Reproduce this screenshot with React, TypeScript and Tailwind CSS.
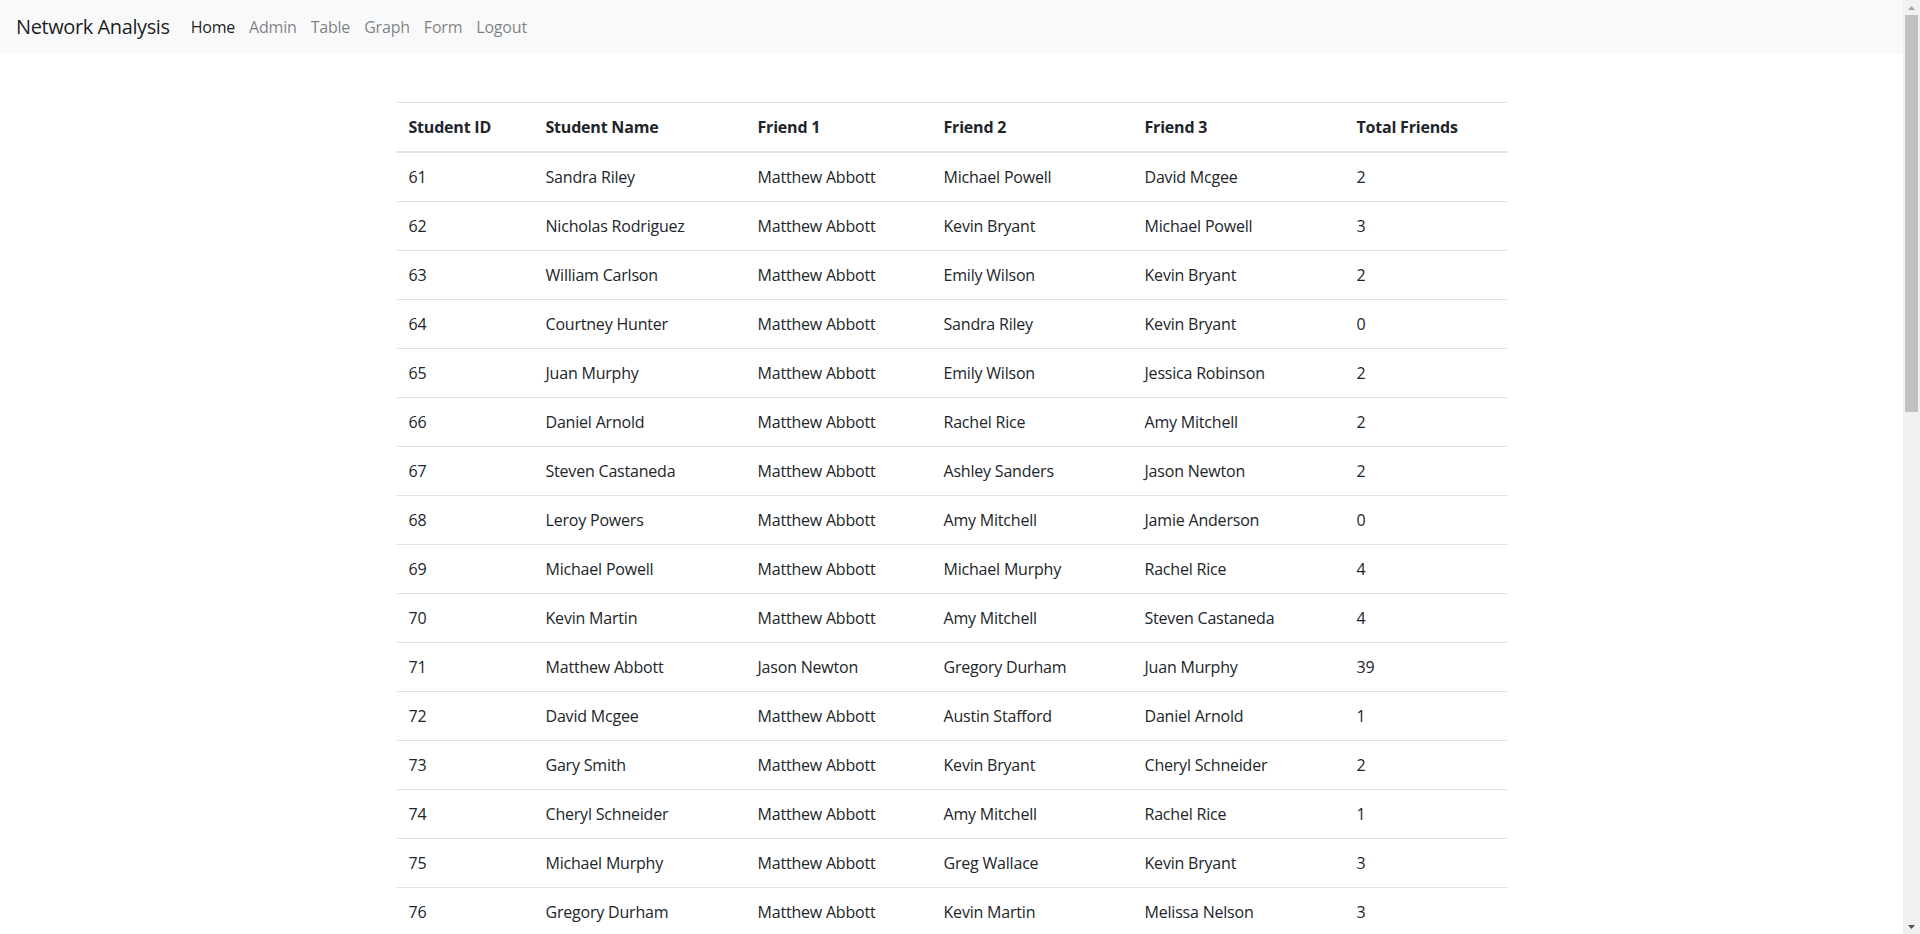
import React from "react";

type Row = [number, string, string, string, string, number];

// rows 61-76 are visible; the rest only fill the page below the fold
const rows: Row[] = [
  [61, "Sandra Riley", "Matthew Abbott", "Michael Powell", "David Mcgee", 2],
  [62, "Nicholas Rodriguez", "Matthew Abbott", "Kevin Bryant", "Michael Powell", 3],
  [63, "William Carlson", "Matthew Abbott", "Emily Wilson", "Kevin Bryant", 2],
  [64, "Courtney Hunter", "Matthew Abbott", "Sandra Riley", "Kevin Bryant", 0],
  [65, "Juan Murphy", "Matthew Abbott", "Emily Wilson", "Jessica Robinson", 2],
  [66, "Daniel Arnold", "Matthew Abbott", "Rachel Rice", "Amy Mitchell", 2],
  [67, "Steven Castaneda", "Matthew Abbott", "Ashley Sanders", "Jason Newton", 2],
  [68, "Leroy Powers", "Matthew Abbott", "Amy Mitchell", "Jamie Anderson", 0],
  [69, "Michael Powell", "Matthew Abbott", "Michael Murphy", "Rachel Rice", 4],
  [70, "Kevin Martin", "Matthew Abbott", "Amy Mitchell", "Steven Castaneda", 4],
  [71, "Matthew Abbott", "Jason Newton", "Gregory Durham", "Juan Murphy", 39],
  [72, "David Mcgee", "Matthew Abbott", "Austin Stafford", "Daniel Arnold", 1],
  [73, "Gary Smith", "Matthew Abbott", "Kevin Bryant", "Cheryl Schneider", 2],
  [74, "Cheryl Schneider", "Matthew Abbott", "Amy Mitchell", "Rachel Rice", 1],
  [75, "Michael Murphy", "Matthew Abbott", "Greg Wallace", "Kevin Bryant", 3],
  [76, "Gregory Durham", "Matthew Abbott", "Kevin Martin", "Melissa Nelson", 3],
  [77, "Greg Wallace", "Matthew Abbott", "Gary Smith", "Leroy Powers", 2],
  [78, "Emily Wilson", "Matthew Abbott", "Juan Murphy", "William Carlson", 3],
  [79, "Ashley Sanders", "Matthew Abbott", "Courtney Hunter", "Daniel Arnold", 1],
  [80, "Kevin Bryant", "Matthew Abbott", "Sandra Riley", "Gary Smith", 6],
  [81, "Rachel Rice", "Matthew Abbott", "Michael Powell", "Cheryl Schneider", 4],
  [82, "Amy Mitchell", "Matthew Abbott", "Kevin Martin", "Leroy Powers", 5],
  [83, "Jason Newton", "Matthew Abbott", "Steven Castaneda", "Emily Wilson", 3],
  [84, "Jamie Anderson", "Matthew Abbott", "Greg Wallace", "Juan Murphy", 1],
  [85, "Austin Stafford", "Matthew Abbott", "David Mcgee", "Rachel Rice", 1],
  [86, "Melissa Nelson", "Matthew Abbott", "Gregory Durham", "Amy Mitchell", 1],
  [87, "Jessica Robinson", "Matthew Abbott", "Juan Murphy", "Kevin Bryant", 1],
  [88, "Brian Lee", "Matthew Abbott", "Nicholas Rodriguez", "Emily Wilson", 0],
  [89, "Laura Hayes", "Matthew Abbott", "Ashley Sanders", "Gary Smith", 0],
  [90, "Thomas Reed", "Matthew Abbott", "Michael Murphy", "Jason Newton", 1],
  [91, "Karen Scott", "Matthew Abbott", "Amy Mitchell", "Rachel Rice", 0],
  [92, "Joseph Grant", "Matthew Abbott", "Kevin Bryant", "Greg Wallace", 0],
  [93, "Angela Brooks", "Matthew Abbott", "Emily Wilson", "Sandra Riley", 0],
  [94, "Ryan Porter", "Matthew Abbott", "Jason Newton", "David Mcgee", 0],
  [95, "Megan Ward", "Matthew Abbott", "Rachel Rice", "Kevin Martin", 0],
  [96, "Eric Fuller", "Matthew Abbott", "Gary Smith", "Amy Mitchell", 0],
  [97, "Nancy Ortiz", "Matthew Abbott", "Michael Powell", "Juan Murphy", 0],
  [98, "Scott Fields", "Matthew Abbott", "Kevin Bryant", "Emily Wilson", 0],
  [99, "Tina Howard", "Matthew Abbott", "Leroy Powers", "Rachel Rice", 0],
  [100, "Paul Jensen", "Matthew Abbott", "Amy Mitchell", "Jason Newton", 0],
];

const cols = ["w-[137px]", "w-[212px]", "w-[186px]", "w-[201px]", "w-[212px]", "w-[162px]"];
const heads = ["Student ID", "Student Name", "Friend 1", "Friend 2", "Friend 3", "Total Friends"];
const links = ["Home", "Admin", "Table", "Graph", "Form", "Logout"];

// the window's scrollbar, as it shows in the screenshot
function Scrollbar() {
  return (
    <div className="flex h-[934px] w-[17px] shrink-0 flex-col bg-[#f1f1f1]">
      <div className="flex h-[15px] items-center justify-center">
        <svg width="7" height="4" viewBox="0 0 7 4">
          <path d="M3.5 0 7 4H0z" fill="#a3a3a3" />
        </svg>
      </div>
      <div className="mx-[2px] h-[397px] bg-[#c1c1c1]" />
      <div className="flex-1" />
      <div className="flex h-[15px] items-center justify-center">
        <svg width="7" height="4" viewBox="0 0 7 4">
          <path d="M0 0h7L3.5 4z" fill="#505050" />
        </svg>
      </div>
    </div>
  );
}

export default function App() {
  return (
    <div
      className="flex h-screen items-start overflow-hidden bg-white text-[16px] leading-6 tracking-[-0.2px] text-[#212529]"
      style={{ fontFamily: '"Segoe UI", "Open Sans", "Noto Sans", sans-serif' }}
    >
      <div className="min-w-0 flex-1">
        <nav className="flex h-[54px] items-center bg-[#f8f9fa] px-4">
          <span className="mr-[14px] text-[20px] leading-[30px] tracking-[-0.4px] text-black/90">
            Network Analysis
          </span>
          <ul className="flex">
            {links.map((l, i) => (
              <li key={l} className={i === 0 ? "px-[7px] text-black/90" : "px-[7px] text-black/50"}>
                {l}
              </li>
            ))}
          </ul>
        </nav>

        <div className="mx-auto mt-12 mb-4 max-w-[1140px] px-[15px]">
          <table className="w-full table-fixed">
            <thead>
              <tr>
                {heads.map((h, i) => (
                  <th
                    key={h}
                    className={`${cols[i]} border-t border-b-2 border-[#dee2e6] p-3 text-left font-bold`}
                  >
                    {h}
                  </th>
                ))}
              </tr>
            </thead>
            <tbody>
              {rows.map((r) => (
                <tr key={r[0]}>
                  {r.map((c, i) => (
                    <td key={i} className="border-t border-[#dee2e6] p-3">
                      {c}
                    </td>
                  ))}
                </tr>
              ))}
            </tbody>
          </table>
        </div>
      </div>
      <Scrollbar />
    </div>
  );
}
